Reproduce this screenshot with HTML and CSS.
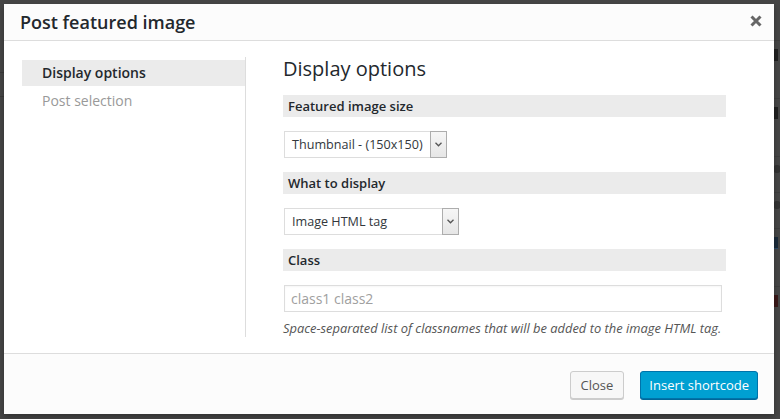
FILE: index.html
```html
<!DOCTYPE html>
<html lang="en">
<head>
    <meta charset="UTF-8">
    <meta name="viewport" content="width=device-width, initial-scale=1.0">
    <title>Post featured image</title>
    <link rel="stylesheet" href="styles.css">
</head>
<body>
    <!-- page behind the modal, dimmed -->
    <div class="backdrop">
        <div class="bg-left">
            <div class="bg-rule"></div>
            <div class="bg-rule"></div>
        </div>
        <div class="bg-right">
            <div class="bg-row"><span class="bg-mark"></span></div>
            <div class="bg-row"><span class="bg-mark"></span></div>
            <div class="bg-row icon"><span class="bg-mark round"></span></div>
            <div class="bg-row icon"><span class="bg-mark round"></span></div>
            <div class="bg-row link"><span class="bg-mark"></span></div>
            <div class="bg-row red"><span class="bg-mark"></span></div>
        </div>
    </div>

    <div class="modal">
        <div class="modal-header">
            <h1 class="modal-title">Post featured image</h1>
            <button class="modal-close" title="Close">
                <svg width="12" height="12" viewBox="0 0 12 12">
                    <path d="M1.5 1.5 L10.5 10.5 M10.5 1.5 L1.5 10.5" stroke="#666" stroke-width="3" fill="none"/>
                </svg>
            </button>
        </div>

        <div class="modal-body">
            <ul class="modal-nav">
                <li class="nav-item active">Display options</li>
                <li class="nav-item">Post selection</li>
            </ul>

            <div class="modal-panel">
                <h2 class="panel-title">Display options</h2>

                <div class="field-label">Featured image size</div>
                <div class="select select-size">
                    <span class="select-text">Thumbnail - (150x150)</span>
                    <span class="select-arrow">
                        <svg width="7" height="5" viewBox="0 0 7 5">
                            <path d="M0.5 0.8 L3.5 3.8 L6.5 0.8" stroke="#555" stroke-width="1.3" fill="none"/>
                        </svg>
                    </span>
                </div>

                <div class="field-label">What to display</div>
                <div class="select select-display">
                    <span class="select-text">Image HTML tag</span>
                    <span class="select-arrow">
                        <svg width="7" height="5" viewBox="0 0 7 5">
                            <path d="M0.5 0.8 L3.5 3.8 L6.5 0.8" stroke="#555" stroke-width="1.3" fill="none"/>
                        </svg>
                    </span>
                </div>

                <div class="field-label">Class</div>
                <input type="text" class="text-input" placeholder="class1 class2">
                <p class="help">Space-separated list of classnames that will be added to the image HTML tag.</p>
            </div>
        </div>

        <div class="modal-footer">
            <button class="button">Close</button>
            <button class="button button-primary">Insert shortcode</button>
        </div>
    </div>
</body>
</html>
```

FILE: styles.css
```css
* {
    margin: 0;
    padding: 0;
    box-sizing: border-box;
}

body {
    font-family: 'Open Sans', 'Noto Sans', sans-serif;
    width: 780px;
    height: 419px;
    overflow: hidden;
    background-color: #464646;
    position: relative;
    color: #23282d;
}

/* dimmed page behind the modal */
.backdrop {
    display: flex;
    justify-content: space-between;
    height: 100%;
}

.bg-left {
    width: 10px;
    padding-top: 72px;
}

.bg-rule {
    height: 1px;
    background-color: #3a3a3a;
    margin-bottom: 23px;
}

.bg-right {
    width: 8px;
    padding-top: 40px;
}

.bg-row {
    height: 58px;
    border-top: 1px solid #3e3e3e;
    padding: 8px 0 0 1px;
}

.bg-row.icon {
    height: 36px;
}

.bg-mark {
    display: block;
    width: 5px;
    height: 12px;
    background-color: #202020;
}

.bg-mark.round {
    width: 8px;
    height: 8px;
    border-radius: 50%;
    background-color: #333;
}

.bg-row.link .bg-mark {
    background-color: #1a2a3a;
    border-bottom: 1px solid #2a4a6a;
}

.bg-row.red .bg-mark {
    background-color: #3a1818;
}

/* modal */
.modal {
    position: absolute;
    top: 4px;
    left: 4px;
    width: 770px;
    height: 410px;
    background-color: #fff;
    display: flex;
    flex-direction: column;
    box-shadow: 0 3px 6px rgba(0, 0, 0, 0.3);
}

.modal-header {
    height: 37px;
    background-color: #fcfcfc;
    border-bottom: 1px solid #ddd;
    display: flex;
    align-items: center;
    justify-content: space-between;
    padding: 0 12px 0 16px;
}

.modal-title {
    font-size: 18px;
    font-weight: 600;
    color: #23282d;
    line-height: 36px;
}

.modal-close {
    background: none;
    border: none;
    width: 12px;
    height: 12px;
    cursor: pointer;
    display: flex;
    margin-top: -2px;
}

.modal-body {
    flex: 1;
    display: flex;
}

.modal-nav {
    list-style: none;
    width: 224px;
    margin: 16px 0 16px 18px;
    padding-top: 3px;
    border-right: 1px solid #ddd;
}

.nav-item {
    height: 26px;
    line-height: 26px;
    margin-bottom: 2px;
    padding-left: 20px;
    font-size: 14px;
    color: #999;
}

.nav-item.active {
    background-color: #ebebeb;
    color: #23282d;
    font-weight: 600;
}

.modal-panel {
    flex: 1;
    padding: 14px 48px 0 37px;
}

.panel-title {
    font-size: 20px;
    font-weight: 400;
    line-height: 28px;
    margin-bottom: 12px;
    color: #23282d;
}

.field-label {
    height: 22px;
    line-height: 22px;
    background-color: #ebebeb;
    padding-left: 5px;
    font-size: 13px;
    font-weight: 600;
    color: #23282d;
    margin-bottom: 14px;
}

.select {
    display: flex;
    align-items: stretch;
    height: 27px;
    margin: 0 0 14px 1px;
    border: 1px solid #ddd;
    border-right: none;
    background-color: #fff;
}

.select-size {
    width: 163px;
}

.select-display {
    width: 175px;
}

.select-text {
    flex: 1;
    padding-left: 7px;
    font-size: 12.6px;
    line-height: 25px;
    color: #32373c;
    white-space: nowrap;
}

.select-arrow {
    width: 17px;
    margin: -1px 0;
    border: 1px solid #adadad;
    background: linear-gradient(#f6f6f6, #e6e6e6);
    display: flex;
    align-items: center;
    justify-content: center;
}

.text-input {
    display: block;
    width: 438px;
    height: 27px;
    margin-left: 1px;
    border: 1px solid #ddd;
    padding: 0 6px;
    font-family: inherit;
    font-size: 14px;
    color: #32373c;
    box-shadow: inset 0 1px 2px rgba(0, 0, 0, 0.04);
}

.text-input::placeholder {
    color: #a0a0a0;
}

.help {
    margin-top: 7px;
    font-size: 12.9px;
    font-style: italic;
    color: #555;
    white-space: nowrap;
}

.modal-footer {
    height: 61px;
    background-color: #fcfcfc;
    border-top: 1px solid #ddd;
    display: flex;
    justify-content: flex-end;
    align-items: center;
    gap: 16px;
    padding: 2px 16px 0 0;
}

.button {
    height: 28px;
    padding: 0 10px;
    font-family: inherit;
    font-size: 13px;
    line-height: 26px;
    color: #555;
    background-color: #f7f7f7;
    border: 1px solid #ccc;
    border-radius: 3px;
    box-shadow: 0 1px 0 #ccc;
    cursor: pointer;
}

.button-primary {
    padding: 0 8px;
    color: #fff;
    background-color: #00a0d2;
    border-color: #0073aa;
    box-shadow: 0 1px 0 #006799;
}
```
